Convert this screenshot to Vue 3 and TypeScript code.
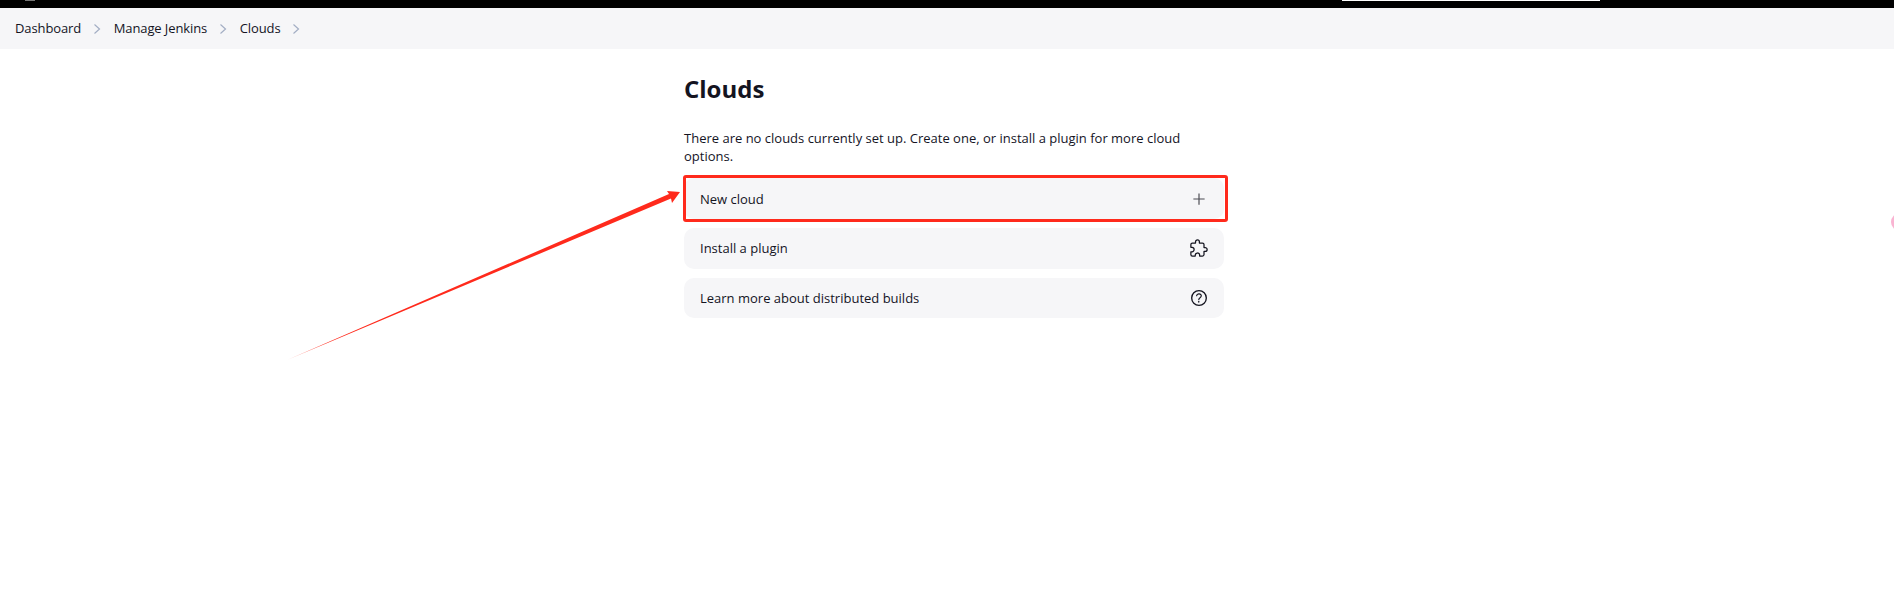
<script setup lang="ts">
interface Crumb {
  label: string;
}

interface Action {
  label: string;
  icon: 'plus' | 'puzzle' | 'help';
}

const crumbs: Crumb[] = [{ label: 'Dashboard' }, { label: 'Manage Jenkins' }, { label: 'Clouds' }];

const actions: Action[] = [
  { label: 'New cloud', icon: 'plus' },
  { label: 'Install a plugin', icon: 'puzzle' },
  { label: 'Learn more about distributed builds', icon: 'help' },
];
</script>

<template>
  <div class="page">
    <div class="topbar">
      <span class="topbar-mark"></span>
      <span class="topbar-field"></span>
    </div>

    <nav class="breadcrumbs">
      <template v-for="crumb in crumbs" :key="crumb.label">
        <span class="crumb">{{ crumb.label }}</span>
        <svg class="chevron" width="10" height="12" viewBox="0 0 10 12" fill="none">
          <path d="M2.5 1.5 7.5 6l-5 4.5" stroke="#a3aec4" stroke-width="1.2" />
        </svg>
      </template>
    </nav>

    <main class="content">
      <h1 class="title">Clouds</h1>
      <p class="intro">There are no clouds currently set up. Create one, or install a plugin for more cloud options.</p>
      <ul class="actions">
        <li v-for="action in actions" :key="action.label" class="action">
          <span>{{ action.label }}</span>
          <svg
            class="icon"
            width="20"
            height="20"
            :viewBox="action.icon === 'help' ? '16 16 480 480' : '0 0 512 512'"
            fill="none"
            stroke="#14141f"
          >
            <path v-if="action.icon === 'plus'" d="M256 112v288M400 256H112" stroke="#4b4b52" stroke-width="30" />
            <path
              v-else-if="action.icon === 'puzzle'"
              d="M413.660 246.100H386a2 2 0 01-2-2v-77.240A38.860 38.860 0 00345.140 128H267.900a2 2 0 01-2-2V98.340c0-27.140-21.500-49.860-48.630-50.330a49.530 49.530 0 00-50.400 49.510V126a2 2 0 01-2 2H87.620A39.740 39.740 0 0048 167.620V238a2 2 0 002 2h26.910c29.370 0 53.680 25.480 54.090 54.850.420 29.870-23.510 57.150-53.290 57.150H50a2 2 0 00-2 2v70.380A39.740 39.740 0 0087.620 464H158a2 2 0 002-2v-20.930c0-30.280 24.750-56.350 55-57.060 30.100-.700 57 20.310 57 50.290V462a2 2 0 002 2h71.140A38.860 38.860 0 00384 425.140v-78a2 2 0 012-2h28.480c27.630 0 49.520-22.670 49.520-50.400s-23.200-48.640-50.340-48.640z"
              stroke-width="32"
              stroke-linecap="round"
              stroke-linejoin="round"
            />
            <template v-else>
              <path d="M256 80a176 176 0 10176 176A176 176 0 00256 80z" stroke-width="32" />
              <path
                d="M200 202.290s.840-17.500 19.570-32.570C230.680 160.770 244 158.180 256 158c10.930-.140 20.690 1.670 26.530 4.450 10 4.760 29.470 16.380 29.470 41.090 0 26-17 37.810-36.370 50.800S251 281.430 251 296"
                stroke-width="28"
                stroke-linecap="round"
              />
              <circle cx="250" cy="348" r="20" fill="#14141f" stroke="none" />
            </template>
          </svg>
        </li>
      </ul>
    </main>

    <div class="highlight"></div>
    <svg class="arrow" width="400" height="175" viewBox="0 0 400 175">
      <defs>
        <linearGradient id="tail" x1="0" y1="1" x2="1" y2="0">
          <stop offset="0" stop-color="#ff2a1c" stop-opacity="0.5" />
          <stop offset="0.1" stop-color="#ff2a1c" />
        </linearGradient>
      </defs>
      <path d="M1 171 383 5 381 2 394 3 386 14 385 9.500Z" fill="url(#tail)" />
    </svg>
    <span class="edge-dot"></span>
  </div>
</template>

<style>
html,
body {
  margin: 0;
  background: #fff;
}
</style>

<style scoped>
.page {
  position: relative;
  width: 1894px;
  height: 597px;
  overflow: hidden;
  background: #fff;
  color: #14141f;
  font-family: "Open Sans", "Noto Sans", sans-serif;
  font-size: 13px;
}

.topbar {
  position: relative;
  height: 8px;
  background: #000;
}

.topbar-mark {
  position: absolute;
  left: 25px;
  top: 0;
  width: 10px;
  height: 1px;
  background: #777;
}

.topbar-field {
  position: absolute;
  left: 1342px;
  top: 0;
  width: 258px;
  height: 1px;
  background: #fff;
}

.breadcrumbs {
  display: flex;
  align-items: center;
  height: 41px;
  padding-left: 15px;
  background: #f6f6f8;
}

.crumb {
  letter-spacing: -0.1px;
  padding-bottom: 1px;
}

.chevron {
  margin: 0 12px 0 10.500px;
}

.content {
  width: 540px;
  margin-left: 684px;
}

.title {
  margin: 26px 0 0;
  font-size: 24px;
  line-height: 28px;
  font-weight: 700;
}

.intro {
  margin: 26px 0 0;
  line-height: 18px;
}

.actions {
  display: flex;
  flex-direction: column;
  gap: 9px;
  margin: 13px 0 0;
  padding: 0;
  list-style: none;
}

.action {
  display: flex;
  align-items: center;
  justify-content: space-between;
  box-sizing: border-box;
  height: 41px;
  padding: 0 15px 0 16px;
  border-radius: 10px;
  background: #f6f6f8;
}

.action + .action {
  padding-bottom: 1px;
}

.action:last-child {
  height: 40px;
}

.icon {
  display: block;
}

.highlight {
  position: absolute;
  left: 683px;
  top: 175px;
  width: 545px;
  height: 47px;
  box-sizing: border-box;
  border: 3px solid #ff2a1c;
  border-radius: 3px;
}

.arrow {
  position: absolute;
  left: 286px;
  top: 189px;
}

.edge-dot {
  position: absolute;
  left: 1891px;
  top: 213px;
  width: 18px;
  height: 18px;
  border-radius: 50%;
  background: #f9b4d2;
}
</style>
